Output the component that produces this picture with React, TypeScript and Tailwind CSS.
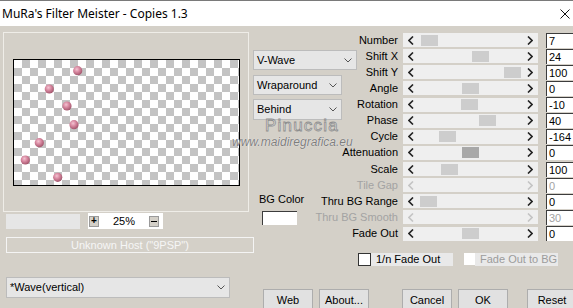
import React from "react";

type Slider = { label: string; value: string; thumb?: number; dark?: boolean; disabled?: boolean };

const sliders: Slider[] = [
  { label: "Number", value: "7", thumb: 18 },
  { label: "Shift X", value: "24", thumb: 69 },
  { label: "Shift Y", value: "100", thumb: 101 },
  { label: "Angle", value: "0", thumb: 59 },
  { label: "Rotation", value: "-10", thumb: 58 },
  { label: "Phase", value: "40", thumb: 76 },
  { label: "Cycle", value: "-164", thumb: 36 },
  { label: "Attenuation", value: "0", thumb: 59, dark: true },
  { label: "Scale", value: "100", thumb: 38 },
  { label: "Tile Gap", value: "0", disabled: true },
  { label: "Thru BG Range", value: "0", thumb: 17 },
  { label: "Thru BG Smooth", value: "30", disabled: true },
  { label: "Fade Out", value: "0", thumb: 59 },
];

// dot centres inside the preview image
const dots = [
  [63.7, 10.7],
  [35.3, 29],
  [53, 46],
  [60, 64.7],
  [25.3, 82.7],
  [11.3, 100],
  [43.7, 117.3],
];

function Chevron() {
  return (
    <svg width="8" height="5" viewBox="0 0 8 5" className="shrink-0">
      <polyline points="0.5,0.5 4,4 7.5,0.5" fill="none" stroke="#555" strokeWidth="1" />
    </svg>
  );
}

function Arrow({ dir, faint }: { dir: "l" | "r"; faint?: boolean }) {
  const pts = dir === "l" ? "5,0.5 1,4.5 5,8.5" : "1,0.5 5,4.5 1,8.5";
  return (
    <svg width="6" height="9" viewBox="0 0 6 9">
      <polyline points={pts} fill="none" stroke={faint ? "#c4c4c4" : "#222"} strokeWidth="1.6" />
    </svg>
  );
}

function Dropdown({ text, className }: { text: string; className: string }) {
  return (
    <div
      className={`flex items-center justify-between bg-[#e6e6e6] border border-[#bcbcbc] pl-[3px] pr-[4px] text-black shrink-0 ${className}`}
    >
      <span>{text}</span>
      <Chevron />
    </div>
  );
}

function Preview() {
  return (
    <div className="w-[227px] h-[127px] border border-black">
      <svg width="225" height="125" viewBox="0 0 225 125">
        <defs>
          <pattern id="chk" width="16" height="16" patternUnits="userSpaceOnUse">
            <rect width="16" height="16" fill="#ffffff" />
            <rect x="8" y="0" width="8" height="8" fill="#c3c3c3" />
            <rect x="0" y="8" width="8" height="8" fill="#c3c3c3" />
          </pattern>
          <radialGradient id="dot" cx="40%" cy="35%" r="65%">
            <stop offset="0%" stopColor="#f3c4d2" />
            <stop offset="45%" stopColor="#d98aa2" />
            <stop offset="100%" stopColor="#a4566d" />
          </radialGradient>
        </defs>
        <rect width="225" height="125" fill="url(#chk)" />
        {dots.map(([x, y], i) => (
          <circle key={i} cx={x} cy={y} r="4.6" fill="url(#dot)" />
        ))}
      </svg>
    </div>
  );
}

function SliderRow({ s }: { s: Slider }) {
  return (
    <div className="flex items-center h-[16.125px]">
      <div
        className={`w-[90px] text-right whitespace-nowrap leading-none ${s.disabled ? "text-[#a3a3a3]" : "text-black"}`}
      >
        {s.label}
      </div>
      <div className="relative ml-[5px] w-[135px] h-[14px] bg-[#efefef] flex items-center justify-between px-[5px]">
        <Arrow dir="l" faint={s.disabled} />
        {s.thumb !== undefined && (
          <div
            className={`absolute top-[1.5px] h-[11px] w-[17px] ${s.dark ? "bg-[#a8a8a8]" : "bg-[#cdcdcd]"}`}
            style={{ left: s.thumb }}
          />
        )}
        <Arrow dir="r" faint={s.disabled} />
      </div>
      <div
        className={`ml-[8px] w-[30px] h-[15px] bg-white border-l border-t border-[#3c3c3c] pl-[2px] leading-[14px] ${s.disabled ? "text-[#a3a3a3]" : "text-black"}`}
      >
        {s.value}
      </div>
    </div>
  );
}

function Button({ text, className = "" }: { text: string; className?: string }) {
  return (
    <div
      className={`w-[50px] h-[24px] shrink-0 bg-[#e1e1e1] border border-[#adadad] flex items-center justify-center text-black ${className}`}
    >
      {text}
    </div>
  );
}

export default function App() {
  return (
    <div className="w-[573px] h-[308px] overflow-hidden bg-[#d4d0c8] font-['Liberation_Sans',Arial,sans-serif] text-[11px]">
      {/* title bar */}
      <div className="h-[26px] bg-white border-t border-[#7a7a7a] flex items-center justify-between pl-[2px] pr-[3px]">
        <span className="font-['Noto_Sans',sans-serif] text-[12px] text-black">MuRa's Filter Meister - Copies 1.3</span>
        <svg width="10" height="10" viewBox="0 0 10 10">
          <path d="M0.5 0.5 L9.5 9.5 M9.5 0.5 L0.5 9.5" stroke="#111" strokeWidth="1" />
        </svg>
      </div>

      <div className="relative flex h-[282px]">
        {/* left column */}
        <div className="w-[253px] shrink-0 flex flex-col">
          <div className="ml-[3px] mt-[6px] w-[246px] h-[180px] border border-[#efede8] pl-[9px] pt-[26px]">
            <Preview />
          </div>
          <div className="mt-[1px] ml-[6px] flex items-center gap-[8px]">
            <div className="w-[74px] h-[15px] bg-[#e6e6e6]" />
            <div className="w-[75px] h-[16px] bg-white flex items-center justify-between px-[1px]">
              <div className="w-[10px] h-[11px] bg-[#d4d0c8] border border-[#9a9a9a] flex items-center justify-center text-[10px] font-bold leading-none">
                +
              </div>
              <span className="text-black">25%</span>
              <div className="w-[10px] h-[11px] bg-[#d4d0c8] border border-[#9a9a9a] flex items-center justify-center mr-[3px]">
                <div className="w-[6px] h-[1px] bg-black" />
              </div>
            </div>
          </div>
          <div className="mt-[8px] ml-[6px] w-[248px] h-[16px] border border-[#f4f4f4] text-center text-[#f6f6f6] leading-[14px]">
            Unknown Host ("9PSP")
          </div>
          <Dropdown text="*Wave(vertical)" className="mt-[24px] ml-[6px] w-[224px] h-[21px]" />
        </div>

        {/* right side */}
        <div className="flex-1 flex flex-col">
          <div className="flex">
            <div className="w-[55px] shrink-0 flex flex-col">
              <Dropdown text="V-Wave" className="mt-[24px] w-[104px] h-[20px]" />
              <Dropdown text="Wraparound" className="mt-[5px] w-[89px] h-[20px]" />
              <Dropdown text="Behind" className="mt-[4px] w-[89px] h-[21px]" />
              <div className="mt-[73px] ml-[6px] whitespace-nowrap leading-[13px] text-black">BG Color</div>
              <div className="mt-[5px] ml-[9px] w-[35px] h-[14px] bg-white border-l border-t border-[#3c3c3c]" />
            </div>
            <div className="pt-[6px] flex flex-col">
              {sliders.map((s) => (
                <SliderRow key={s.label} s={s} />
              ))}
            </div>
          </div>

          <div className="mt-[11px] pl-[105px] flex items-center h-[13px]">
            <div className="w-[13px] h-[13px] bg-white border border-[#333]" />
            <div className="w-[82px] h-[13px] bg-[#e9e9e9] pl-[5px] leading-[13px] text-black">1/n Fade Out</div>
            <div className="ml-[11px] w-[11px] h-[12px] bg-white" />
            <div className="w-[83px] h-[13px] bg-[#e9e9e9] pl-[5px] leading-[13px] text-[#9c9c9c]">Fade Out to BG</div>
          </div>

          <div className="mt-[23px] pl-[10px] flex">
            <Button text="Web" />
            <Button text="About..." className="ml-[6px]" />
            <Button text="Cancel" className="ml-[33px]" />
            <Button text="OK" className="ml-[6px]" />
            <Button text="Reset" className="ml-[19px]" />
          </div>
        </div>

        {/* watermark */}
        <div className="absolute left-[265px] top-[89px] text-[17px] leading-[22px] tracking-[1.2px] text-[#e4e4e4] [-webkit-text-stroke:0.8px_#8e8e8e] font-['Liberation_Sans',sans-serif]">
          Pinuccia
        </div>
        <div className="absolute left-[232px] top-[110px] text-[12px] leading-[12px] italic text-[#7e7e7e] [text-shadow:0_0_1px_#ffffff]">
          www.maidiregrafica.eu
        </div>
      </div>
    </div>
  );
}
